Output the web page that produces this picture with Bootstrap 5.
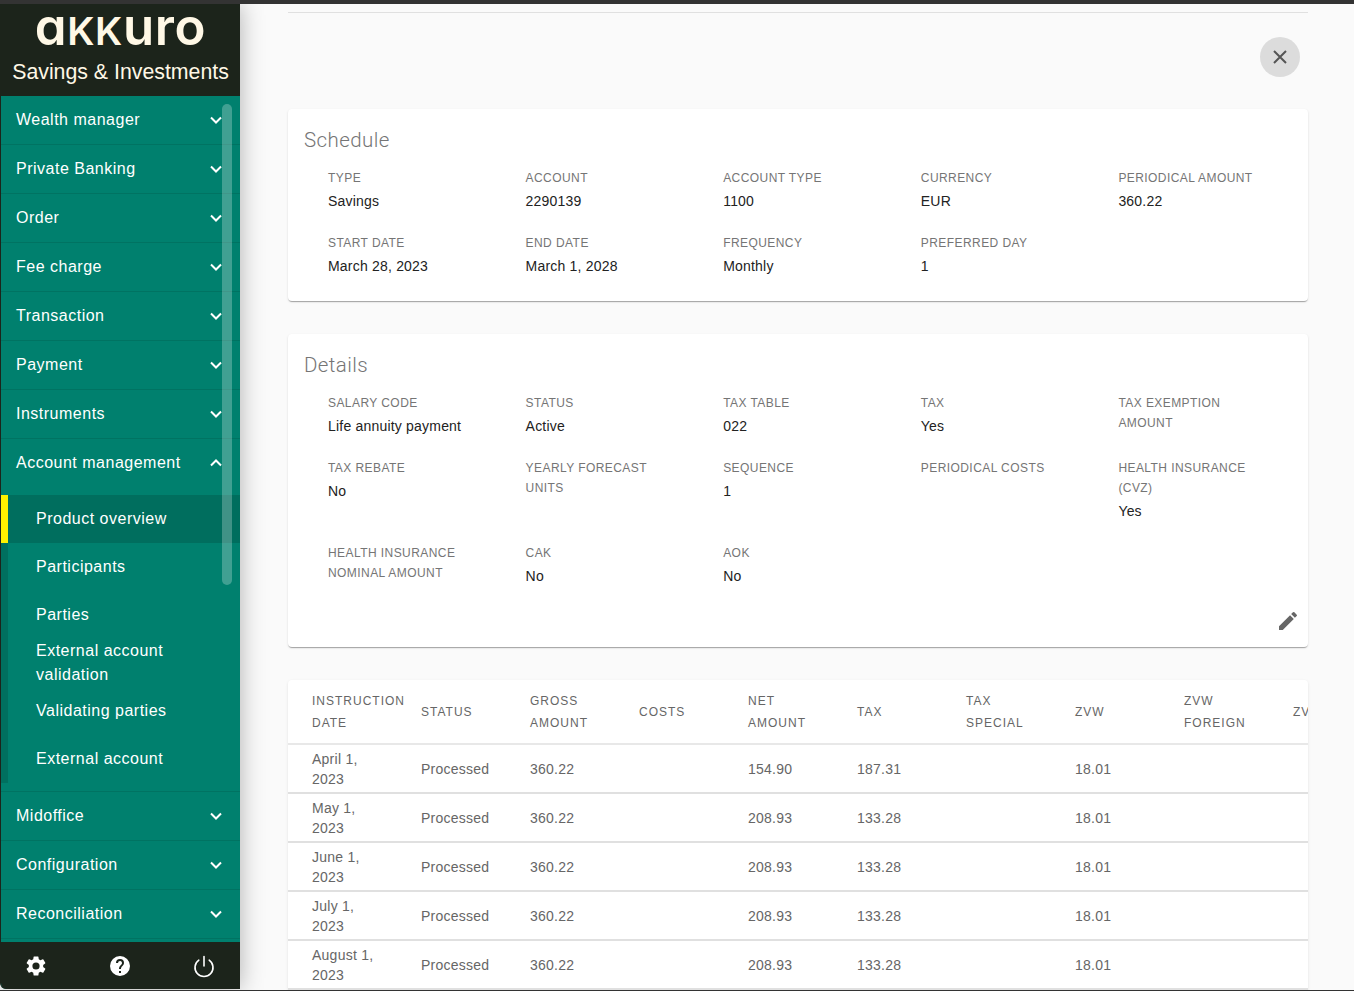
<!DOCTYPE html>
<html lang="en">
<head>
<meta charset="utf-8">
<title>Akkuro</title>
<link href="https://cdn.jsdelivr.net/npm/bootstrap@5.3.0/dist/css/bootstrap.min.css" rel="stylesheet">
<style>
html,body{height:991px;overflow:hidden}
body{font-family:"Liberation Sans",Arial,sans-serif;background:#fafafa;color:#222;font-size:14px}
.topline{height:4px;background:#333}
.botline{height:1px;background:#333}
.shell{height:986px;overflow:hidden}
.side{width:240px;flex:none;background:#00806e;color:#fff;box-shadow:0 0 24px rgba(0,0,0,.3);z-index:2;height:985px;border-bottom-left-radius:6px;border-left:1px solid #1c241b;overflow:hidden}
.brand{background:#1c241b;color:#fff8e6;height:92px;flex:none}
.wordmark{font-family:Inter,sans-serif;font-size:51px;line-height:45px;font-weight:600;height:50px;letter-spacing:.6px}
.wordmark i{font-style:normal;text-transform:uppercase;font-size:.76em}
.brandsub{font-size:21.3px;line-height:26px;margin-top:5px}
.menu{flex:1 1 auto;min-height:0;overflow:hidden}
.mi{height:49px;padding:0 16px 0 15px;font-size:16px;letter-spacing:.5px;border-bottom:1px solid rgba(0,0,0,.1)}
.mi svg{margin-right:1px}
.mi.open{border-bottom-color:transparent}
.subwrap{padding:7px 0 8px;border-bottom:1px solid rgba(0,0,0,.1)}
.subm{margin-left:-1px;border-left:8px solid #00705f;height:288px}
.si{height:48px;padding-left:28px;font-size:16px;letter-spacing:.5px;line-height:24px}
.si.cur{background:#006e5e;margin-left:-8px;padding-left:28px;border-left:8px solid #fff200}
.si.two{padding-right:30px}
.scrollth{position:absolute;top:8px;right:8px;width:10px;height:481px;border-radius:5px;background:rgba(255,255,255,.25)}
.foot{background:#1c241b;height:47px;flex:none;padding:0 24px 0 23px}
.foot svg{display:block}
.main{min-width:0;padding:0 46px 0 48px;background:#fafafa}
.rule{height:9px;border-bottom:1px solid #e0e0e0}
.closeb{width:40px;height:40px;border:0;background:#dcdcdc;border-radius:50%;padding:0;margin:24px 8px 32px 0}
.pane{background:#fff;border-radius:4px;box-shadow:0 2px 1px -1px rgba(0,0,0,.2),0 1px 1px rgba(0,0,0,.14),0 1px 3px rgba(0,0,0,.08);margin-bottom:33px;padding:16px 16px 4px}
.pane.tall{padding-bottom:40px}
.pane-t{font-family:Roboto,sans-serif;font-size:20.5px;line-height:30px;color:#757575;margin:0;font-weight:300;letter-spacing:.4px}
.fields{display:grid;grid-template-columns:repeat(5,197.6px);padding:12px 0 0 24px}
.fld{padding:0 38px 21px 0}
.fld span{display:block;font-size:12px;line-height:20px;padding-top:1px;letter-spacing:.43px;color:#757575;text-transform:uppercase}
.fld b{display:block;font-weight:400;font-size:14px;line-height:20px;margin-top:3px;letter-spacing:.2px;color:#222}
.pen{position:absolute;right:8px;bottom:14px}
.tblwrap{background:#fff;border-radius:4px 4px 0 0;overflow:hidden;box-shadow:0 1px 3px rgba(0,0,0,.1)}
.tbl{display:grid;grid-template-columns:repeat(10,109px);padding-left:24px;width:1100px}
.hc{height:65px;font-size:12px;letter-spacing:1px;line-height:22px;color:#666;display:flex;align-items:center;text-transform:uppercase;border-bottom:2px solid #e8e8e8;padding-right:24px}
.dc{height:49px;font-size:14px;line-height:20px;letter-spacing:.25px;color:#666;display:flex;align-items:center;border-bottom:2px solid #e0e0e0;padding-right:40px}
.hl{margin-left:-24px;padding-left:24px}
</style>
</head>
<body>
<div class="topline"></div>
<div class="shell d-flex">
<aside class="side d-flex flex-column">
  <div class="brand text-center">
    <div class="wordmark">ɑ<i>kk</i>uro</div>
    <div class="brandsub">Savings &amp; Investments</div>
  </div>
  <div class="menu position-relative">
    <div class="mi d-flex justify-content-between align-items-center">Wealth manager<svg width="14" height="14" viewBox="0 0 14 14"><path d="M2 4.5l5 5 5-5" fill="none" stroke="#fff" stroke-width="2"/></svg></div>
    <div class="mi d-flex justify-content-between align-items-center">Private Banking<svg width="14" height="14" viewBox="0 0 14 14"><path d="M2 4.5l5 5 5-5" fill="none" stroke="#fff" stroke-width="2"/></svg></div>
    <div class="mi d-flex justify-content-between align-items-center">Order<svg width="14" height="14" viewBox="0 0 14 14"><path d="M2 4.5l5 5 5-5" fill="none" stroke="#fff" stroke-width="2"/></svg></div>
    <div class="mi d-flex justify-content-between align-items-center">Fee charge<svg width="14" height="14" viewBox="0 0 14 14"><path d="M2 4.5l5 5 5-5" fill="none" stroke="#fff" stroke-width="2"/></svg></div>
    <div class="mi d-flex justify-content-between align-items-center">Transaction<svg width="14" height="14" viewBox="0 0 14 14"><path d="M2 4.5l5 5 5-5" fill="none" stroke="#fff" stroke-width="2"/></svg></div>
    <div class="mi d-flex justify-content-between align-items-center">Payment<svg width="14" height="14" viewBox="0 0 14 14"><path d="M2 4.5l5 5 5-5" fill="none" stroke="#fff" stroke-width="2"/></svg></div>
    <div class="mi d-flex justify-content-between align-items-center">Instruments<svg width="14" height="14" viewBox="0 0 14 14"><path d="M2 4.5l5 5 5-5" fill="none" stroke="#fff" stroke-width="2"/></svg></div>
    <div class="mi open d-flex justify-content-between align-items-center">Account management<svg width="14" height="14" viewBox="0 0 14 14"><path d="M2 9.5l5-5 5 5" fill="none" stroke="#fff" stroke-width="2"/></svg></div>
    <div class="subwrap">
      <div class="subm">
        <div class="si cur d-flex align-items-center">Product overview</div>
        <div class="si d-flex align-items-center">Participants</div>
        <div class="si d-flex align-items-center">Parties</div>
        <div class="si two">External account validation</div>
        <div class="si d-flex align-items-center">Validating parties</div>
        <div class="si d-flex align-items-center">External account</div>
      </div>
    </div>
    <div class="mi d-flex justify-content-between align-items-center">Midoffice<svg width="14" height="14" viewBox="0 0 14 14"><path d="M2 4.5l5 5 5-5" fill="none" stroke="#fff" stroke-width="2"/></svg></div>
    <div class="mi d-flex justify-content-between align-items-center">Configuration<svg width="14" height="14" viewBox="0 0 14 14"><path d="M2 4.5l5 5 5-5" fill="none" stroke="#fff" stroke-width="2"/></svg></div>
    <div class="mi d-flex justify-content-between align-items-center">Reconciliation<svg width="14" height="14" viewBox="0 0 14 14"><path d="M2 4.5l5 5 5-5" fill="none" stroke="#fff" stroke-width="2"/></svg></div>
    <div class="scrollth"></div>
  </div>
  <div class="foot d-flex justify-content-between align-items-center">
    <svg width="24" height="24" viewBox="0 0 24 24"><path fill="#fff" d="M19.14 12.94c.04-.3.06-.61.06-.94s-.02-.64-.07-.94l2.03-1.58a.5.5 0 0 0 .12-.61l-1.92-3.32a.5.5 0 0 0-.59-.22l-2.39.96a7 7 0 0 0-1.62-.94l-.36-2.54a.48.48 0 0 0-.48-.41h-3.84a.48.48 0 0 0-.47.41l-.36 2.54c-.59.24-1.13.57-1.62.94l-2.39-.96a.5.5 0 0 0-.59.22L2.74 8.87a.47.47 0 0 0 .12.61l2.03 1.58c-.05.3-.09.63-.09.94s.02.64.07.94l-2.03 1.58a.5.5 0 0 0-.12.61l1.92 3.32c.12.22.37.29.59.22l2.39-.96c.5.38 1.03.7 1.62.94l.36 2.54c.05.24.24.41.48.41h3.84c.24 0 .44-.17.47-.41l.36-2.54c.59-.24 1.13-.56 1.62-.94l2.39.96c.22.08.47 0 .59-.22l1.92-3.32a.46.46 0 0 0-.12-.61l-2.01-1.58zM12 15.6A3.6 3.6 0 1 1 12 8.4a3.6 3.6 0 0 1 0 7.2z"/></svg>
    <svg width="24" height="24" viewBox="0 0 24 24"><path fill="#fff" d="M12 2a10 10 0 1 0 0 20 10 10 0 0 0 0-20zm1 17h-2v-2h2v2zm2.07-7.75l-.9.92C13.45 12.9 13 13.5 13 15h-2v-.5c0-1.1.45-2.1 1.17-2.83l1.24-1.26A1.99 1.99 0 0 0 12 7a2 2 0 0 0-2 2H8a4 4 0 0 1 8 0c0 .88-.36 1.68-.93 2.25z"/></svg>
    <svg width="24" height="24" viewBox="0 0 24 24"><path fill="none" stroke="#fff" stroke-width="1.6" stroke-linecap="round" d="M12 2.5V12M6.8 6.2a9 9 0 1 0 10.4 0"/></svg>
  </div>
</aside>
<main class="main flex-grow-1">
  <div class="rule"></div>
  <div class="d-flex justify-content-end">
    <button class="closeb d-flex align-items-center justify-content-center" aria-label="Close"><svg width="16" height="16" viewBox="0 0 16 16"><path d="M2 2l12 12M14 2L2 14" stroke="#555" stroke-width="2"/></svg></button>
  </div>
  <section class="pane">
    <h2 class="pane-t">Schedule</h2>
    <div class="fields">
      <div class="fld"><span>Type</span><b>Savings</b></div>
      <div class="fld"><span>Account</span><b>2290139</b></div>
      <div class="fld"><span>Account type</span><b>1100</b></div>
      <div class="fld"><span>Currency</span><b>EUR</b></div>
      <div class="fld"><span>Periodical amount</span><b>360.22</b></div>
      <div class="fld"><span>Start date</span><b>March 28, 2023</b></div>
      <div class="fld"><span>End date</span><b>March 1, 2028</b></div>
      <div class="fld"><span>Frequency</span><b>Monthly</b></div>
      <div class="fld"><span>Preferred day</span><b>1</b></div>
    </div>
  </section>
  <section class="pane tall position-relative">
    <h2 class="pane-t">Details</h2>
    <div class="fields">
      <div class="fld"><span>Salary code</span><b>Life annuity payment</b></div>
      <div class="fld"><span>Status</span><b>Active</b></div>
      <div class="fld"><span>Tax table</span><b>022</b></div>
      <div class="fld"><span>Tax</span><b>Yes</b></div>
      <div class="fld"><span>Tax exemption amount</span></div>
      <div class="fld"><span>Tax rebate</span><b>No</b></div>
      <div class="fld"><span>Yearly forecast units</span></div>
      <div class="fld"><span>Sequence</span><b>1</b></div>
      <div class="fld"><span>Periodical costs</span></div>
      <div class="fld"><span>Health insurance (CVZ)</span><b>Yes</b></div>
      <div class="fld"><span>Health insurance nominal amount</span></div>
      <div class="fld"><span>CAK</span><b>No</b></div>
      <div class="fld"><span>AOK</span><b>No</b></div>
    </div>
    <svg class="pen" width="24" height="24" viewBox="0 0 24 24"><path fill="#666" d="M3 17.25V21h3.75L17.81 9.94l-3.75-3.75L3 17.25zM20.71 7.04a1 1 0 0 0 0-1.41l-2.34-2.34a1 1 0 0 0-1.41 0l-1.83 1.83 3.75 3.75 1.83-1.83z"/></svg>
  </section>
  <section class="tblwrap">
    <div class="tbl">
      <div class="hc hl">Instruction date</div><div class="hc">Status</div><div class="hc">Gross amount</div><div class="hc">Costs</div><div class="hc">Net amount</div><div class="hc">Tax</div><div class="hc">Tax special</div><div class="hc">ZVW</div><div class="hc">ZVW foreign</div><div class="hc">ZVW</div>
      <div class="dc hl">April 1, 2023</div><div class="dc">Processed</div><div class="dc">360.22</div><div class="dc"></div><div class="dc">154.90</div><div class="dc">187.31</div><div class="dc"></div><div class="dc">18.01</div><div class="dc"></div><div class="dc"></div>
      <div class="dc hl">May 1, 2023</div><div class="dc">Processed</div><div class="dc">360.22</div><div class="dc"></div><div class="dc">208.93</div><div class="dc">133.28</div><div class="dc"></div><div class="dc">18.01</div><div class="dc"></div><div class="dc"></div>
      <div class="dc hl">June 1, 2023</div><div class="dc">Processed</div><div class="dc">360.22</div><div class="dc"></div><div class="dc">208.93</div><div class="dc">133.28</div><div class="dc"></div><div class="dc">18.01</div><div class="dc"></div><div class="dc"></div>
      <div class="dc hl">July 1, 2023</div><div class="dc">Processed</div><div class="dc">360.22</div><div class="dc"></div><div class="dc">208.93</div><div class="dc">133.28</div><div class="dc"></div><div class="dc">18.01</div><div class="dc"></div><div class="dc"></div>
      <div class="dc hl">August 1, 2023</div><div class="dc">Processed</div><div class="dc">360.22</div><div class="dc"></div><div class="dc">208.93</div><div class="dc">133.28</div><div class="dc"></div><div class="dc">18.01</div><div class="dc"></div><div class="dc"></div>
    </div>
  </section>
</main>
</div>
<div class="botline"></div>
<script src="https://cdn.jsdelivr.net/npm/bootstrap@5.3.0/dist/js/bootstrap.bundle.min.js"></script>
</body>
</html>
